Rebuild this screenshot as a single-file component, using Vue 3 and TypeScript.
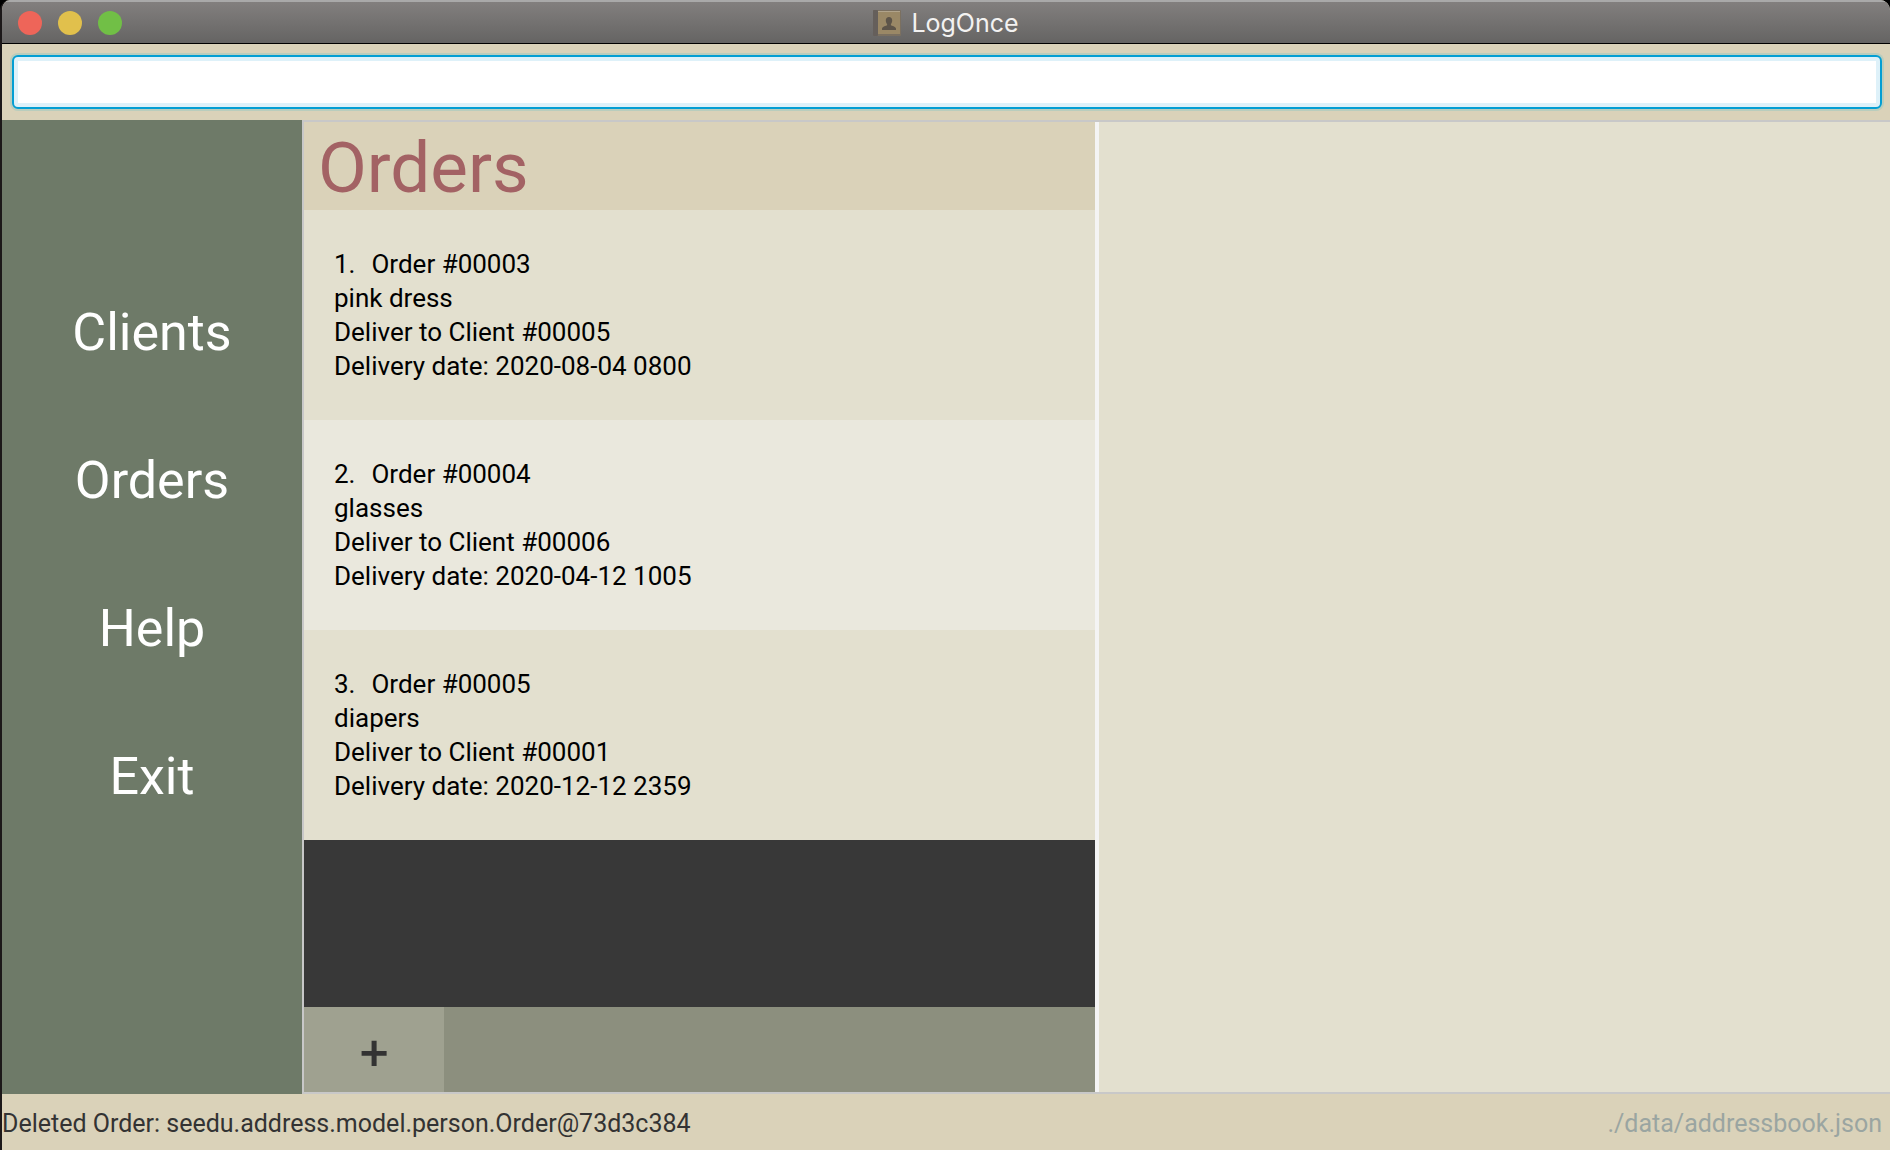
<script setup lang="ts">
interface Order {
  id: string
  item: string
  client: string
  date: string
}

const menu: string[] = ['Clients', 'Orders', 'Help', 'Exit']

const orders: Order[] = [
  { id: '00003', item: 'pink dress', client: '00005', date: '2020-08-04 0800' },
  { id: '00004', item: 'glasses', client: '00006', date: '2020-04-12 1005' },
  { id: '00005', item: 'diapers', client: '00001', date: '2020-12-12 2359' },
]
</script>

<template>
  <div class="window">
    <header class="titlebar">
      <div class="lights">
        <button class="light close" aria-label="Close"></button>
        <button class="light minimise" aria-label="Minimise"></button>
        <button class="light zoom" aria-label="Zoom"></button>
      </div>
      <div class="caption">
        <svg class="book" viewBox="0 0 28 26" aria-hidden="true">
          <rect x="0" y="0" width="28" height="26" rx="1" fill="#7b7060" />
          <rect x="0" y="0" width="5" height="26" rx="1" fill="#655f5b" />
          <rect x="5" y="1" width="22" height="23" fill="#9a8866" />
          <rect x="5" y="1" width="22" height="1" fill="#b0a38b" />
          <path
            d="M16 7c2 0 3.200 1.300 3.200 3.400 0 1.600-.6 2.800-1.300 3.500v1.300c1 .8 4.600 1.100 5.100 3.200V20H9v-1.600c.5-2.100 4.100-2.400 5.100-3.200v-1.300c-.7-.7-1.300-1.900-1.300-3.500C12.800 8.300 14 7 16 7z"
            fill="#5d5449"
          />
        </svg>
        <span>LogOnce</span>
      </div>
    </header>

    <form class="command" @submit.prevent>
      <input class="command-box" type="text" aria-label="Command" />
    </form>

    <main class="body">
      <nav class="sidebar">
        <button v-for="entry in menu" :key="entry" class="menu-item">{{ entry }}</button>
      </nav>
      <div class="panes">
        <section class="pane list-pane">
          <h1 class="heading">Orders</h1>
          <ol class="orders">
            <li v-for="(order, i) in orders" :key="order.id" class="order">
              <p class="order-id"><span>{{ i + 1 }}.</span><span>Order #{{ order.id }}</span></p>
              <p>{{ order.item }}</p>
              <p>Deliver to Client #{{ order.client }}</p>
              <p>Delivery date: {{ order.date }}</p>
            </li>
          </ol>
          <div class="toolbar">
            <button class="add" aria-label="Add order">+</button>
          </div>
        </section>
        <div class="divider"></div>
        <section class="pane"></section>
      </div>
    </main>

    <footer class="status">
      <span>Deleted Order: seedu.address.model.person.Order@73d3c384</span>
      <span class="path">./data/addressbook.json</span>
    </footer>
  </div>
</template>

<style>
body {
  margin: 0;
  background: #000;
}
</style>

<style scoped>
.window {
  display: flex;
  flex-direction: column;
  box-sizing: border-box;
  min-height: 100vh;
  border-left: 2px solid #1c1819;
  border-radius: 10px 10px 0 0;
  overflow: hidden;
  background: #dad2b9;
  color: #333;
  font: 26px/34px Roboto, "Liberation Sans", sans-serif;
}

button {
  padding: 0;
  border: 0;
  background: none;
  font-family: inherit;
}

.titlebar {
  display: grid;
  grid-template-columns: 1fr auto 1fr;
  align-items: center;
  box-sizing: border-box;
  height: 44px;
  padding: 0 16px;
  border-top: 2px solid #a9a9a9;
  border-bottom: 1px solid #000;
  background: linear-gradient(#827f7e, #656463);
}

.lights {
  display: flex;
  gap: 16px;
}

.light {
  width: 24px;
  height: 24px;
  border-radius: 50%;
}

.close {
  background: #ee6559;
}

.minimise {
  background: #e1c04c;
}

.zoom {
  background: #71bf46;
}

.caption {
  display: flex;
  align-items: center;
  gap: 10px;
  color: #f3f2f1;
  font-family: Inter, "Liberation Sans", sans-serif;
  font-size: 25px;
}

.book {
  width: 28px;
  height: 26px;
}

.command {
  display: flex;
  padding: 11px 8px 11px 10px;
}

.command-box {
  flex: 1;
  box-sizing: border-box;
  height: 54px;
  padding: 0 16px;
  border: 2px solid #039ed3;
  border-radius: 6px;
  outline: 0;
  background: #fff;
  box-shadow: 0 0 0 2px #b9cdbd, inset 0 0 0 4px #def1f9;
  color: #333;
  font: inherit;
}

.body {
  display: flex;
  flex: 1;
}

.sidebar {
  display: flex;
  flex-direction: column;
  flex: none;
  width: 300px;
  padding-top: 138px;
  box-sizing: border-box;
  background: #6e7a68;
}

.menu-item {
  height: 148px;
  color: #fff;
  font-size: 52px;
}

.panes {
  display: flex;
  flex: 1;
  border: 2px solid #c8c8c8;
  border-right: 0;
}

.pane {
  flex: 1;
  background: #e3e0cf;
}

.list-pane {
  display: flex;
  flex-direction: column;
  background: #383838;
}

.divider {
  width: 4px;
  background: #f4f4f4;
}

.heading {
  margin: 0;
  padding: 4px 14px 0;
  background: #dad2b9;
  color: #a36264;
  font-size: 71px;
  font-weight: 400;
  line-height: 84px;
}

.orders {
  flex: 1;
  margin: 0;
  padding: 0;
  list-style: none;
}

.order {
  padding: 37px 30px;
  background: #e3e0cf;
  color: #000;
}

.order:nth-child(even) {
  background: #eae8dd;
}

.order p {
  margin: 0;
}

.order .order-id {
  display: flex;
  gap: 16px;
}

.toolbar {
  display: flex;
  height: 85px;
  background: #8c8f7e;
}

.add {
  width: 140px;
  background: #9fa190;
  color: #333;
  font-family: Inter, "Liberation Sans", sans-serif;
  font-size: 52px;
  font-weight: 500;
}

.status {
  display: flex;
  justify-content: space-between;
  padding: 13px 8px 9px 0;
  font-size: 25px;
}

.path {
  color: #9aa5a1;
}
</style>
